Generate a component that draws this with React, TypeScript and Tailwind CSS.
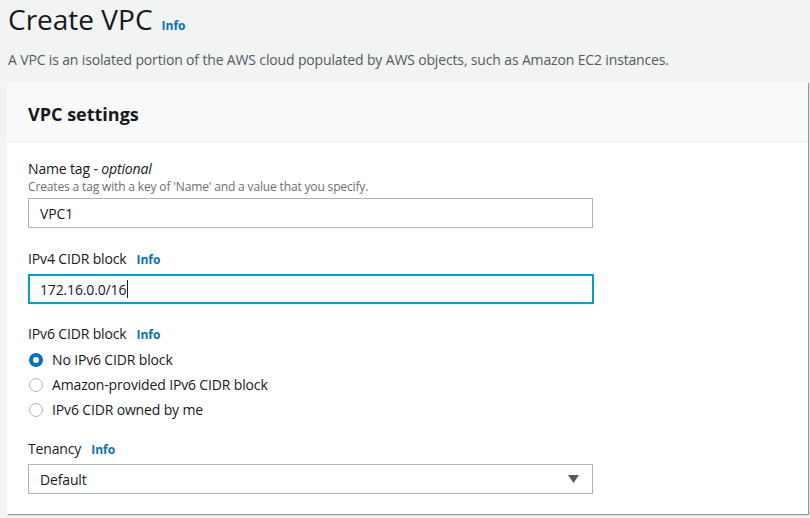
export default function App() {
  const font = { fontFamily: '"Open Sans", "Noto Sans", Arial, sans-serif' };

  return (
    <main className="h-[518px] w-[810px] overflow-hidden bg-[#f2f3f3] tracking-[-0.15px] text-[#16191f]" style={font}>
      {/* Header */}
      <header className="px-2 pt-[1px]">
        <div className="flex items-baseline gap-[9px]">
          <h1 className="text-[28px] leading-[36px] font-normal tracking-normal text-[#16191f]">Create VPC</h1>
          <a className="text-[12px] font-bold tracking-normal text-[#0073bb]">Info</a>
        </div>
        <p className="mt-[13px] text-[14px] leading-[20px] text-[#545b64]">
          A VPC is an isolated portion of the AWS cloud populated by AWS objects, such as Amazon EC2 instances.
        </p>
      </header>

      {/* Settings panel */}
      <section className="ml-[7px] mt-[12px] w-[801px] bg-white shadow-[1px_1px_1px_0_rgba(0,28,36,0.3),1px_1px_1px_0_rgba(0,28,36,0.15)]">
        <div className="flex h-[60px] items-center border-b border-[#eaeded] bg-[#fafafa] px-[21px] pt-[4px]">
          <h2 className="text-[18px] font-bold leading-[22px] tracking-normal">VPC settings</h2>
        </div>

        <div className="px-[21px] pt-[17px] pb-[20px]">
          {/* Name tag */}
          <div>
            <label className="block text-[14px] leading-[20px]">
              Name tag - <i>optional</i>
            </label>
            <p className="text-[12px] leading-[16px] text-[#687078]">
              Creates a tag with a key of 'Name' and a value that you specify.
            </p>
            <div className="mt-[3px] flex h-[30px] w-[565px] items-center border border-[#aab7b8] px-[11px] text-[14px]">
              VPC1
            </div>
          </div>

          {/* IPv4 */}
          <div className="mt-[21px]">
            <div className="flex items-baseline gap-[10px]">
              <label className="text-[14px] leading-[20px]">IPv4 CIDR block</label>
              <a className="text-[12px] font-bold tracking-normal text-[#0073bb]">Info</a>
            </div>
            <div className="mt-[5px] flex h-[30px] w-[566px] items-center border-2 border-[#00a1c9] px-[10px] text-[14px]">
              172.16.0.0/16
              <span className="ml-px inline-block h-[18px] w-px bg-[#16191f]" />
            </div>
          </div>

          {/* IPv6 */}
          <div className="mt-[20px]">
            <div className="flex items-baseline gap-[10px]">
              <label className="text-[14px] leading-[20px]">IPv6 CIDR block</label>
              <a className="text-[12px] font-bold tracking-normal text-[#0073bb]">Info</a>
            </div>
            <div className="mt-[3px] flex flex-col">
              {[
                { label: "No IPv6 CIDR block", checked: true },
                { label: "Amazon-provided IPv6 CIDR block", checked: false },
                { label: "IPv6 CIDR owned by me", checked: false },
              ].map((r) => (
                <div key={r.label} className="flex h-[25px] items-center">
                  <span
                    className={
                      r.checked
                        ? "ml-[1px] inline-block h-[14px] w-[14px] rounded-full border-[4px] border-[#0073bb] bg-white"
                        : "ml-[1px] inline-block h-[14px] w-[14px] rounded-full border border-[#aab7b8] bg-white"
                    }
                  />
                  <span className="ml-[9px] text-[14px] leading-[20px]">{r.label}</span>
                </div>
              ))}
            </div>
          </div>

          {/* Tenancy */}
          <div className="mt-[17px]">
            <div className="flex items-baseline gap-[10px]">
              <label className="text-[14px] leading-[20px]">Tenancy</label>
              <a className="text-[12px] font-bold tracking-normal text-[#0073bb]">Info</a>
            </div>
            <div className="mt-[5px] flex h-[30px] w-[565px] items-center justify-between border border-[#aab7b8] pl-[11px] pr-[13px] text-[14px]">
              <span>Default</span>
              <svg width="11" height="8" viewBox="0 0 11 8">
                <path d="M0 0 H11 L5.5 8 Z" fill="#545b64" />
              </svg>
            </div>
          </div>
        </div>
      </section>
    </main>
  );
}
